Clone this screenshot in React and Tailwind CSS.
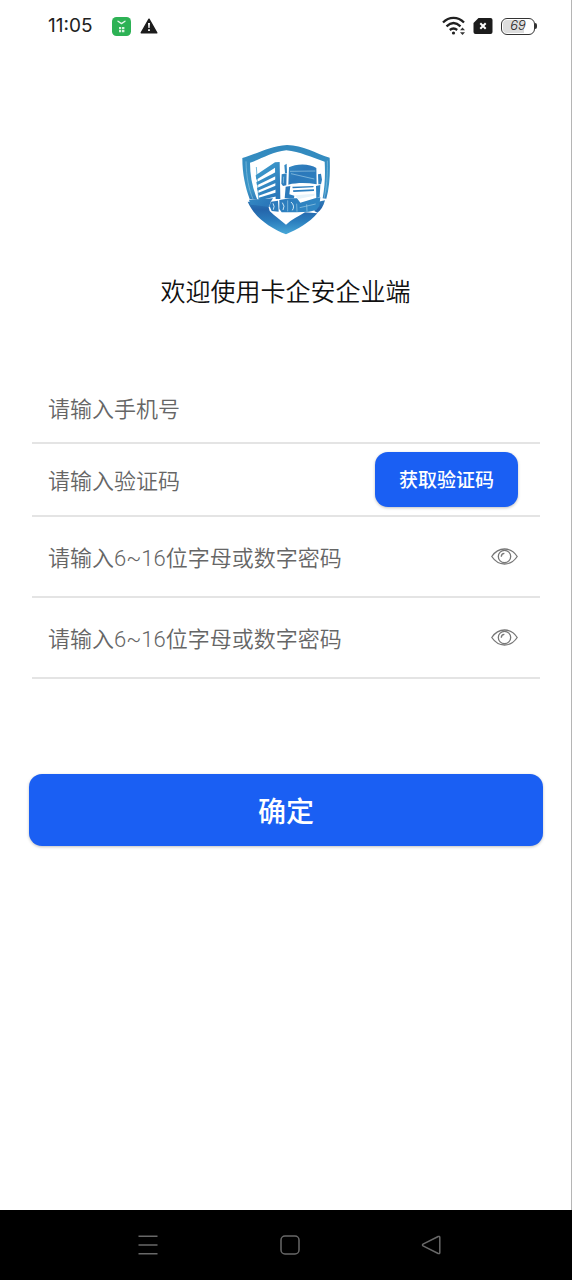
import React, {useState} from "react";

function ShieldLogo() {
    return (
        <svg viewBox="0 0 306 330" className="w-[102px] h-[110px]" role="img" aria-label="卡企安">
            <defs>
                <linearGradient id="shield" gradientUnits="userSpaceOnUse" x1="150" y1="30" x2="150" y2="298">
                    <stop offset="0" stopColor="#3188bd" />
                    <stop offset="0.5" stopColor="#3c96c8" />
                    <stop offset="0.72" stopColor="#2464aa" />
                    <stop offset="0.85" stopColor="#2b7dbd" />
                    <stop offset="1" stopColor="#48a8d8" />
                </linearGradient>
                <linearGradient id="truck" gradientUnits="userSpaceOnUse" x1="80" y1="90" x2="210" y2="235">
                    <stop offset="0" stopColor="#3d9acb" />
                    <stop offset="0.5" stopColor="#2b78ba" />
                    <stop offset="1" stopColor="#2f86c3" />
                </linearGradient>
            </defs>
            <g fill="url(#shield)">
                <path d="M22 69C61 59 101 34 156 30C205 31 241 55 284 68C286 112 284 155 274 191L263 190C270 151 271 117 269 80C231 68 194 50 154 46C111 51 79 72 45 83C45 121 52 158 67 194L44 192C31 157 22 117 22 69Z" />
                <path d="M38 200L98 206L104 228C118 242 136 255 153 269C170 254 190 244 210 232L247 235C222 264 188 283 153 298C104 278 59 248 38 200Z" />
                <path d="M250 200L270 196C265 215 257 227 247 233L238 228Z" />
            </g>
            <path d="M64 96L71 192" fill="none" stroke="#74b9dc" strokeWidth="3" />
            <path d="M33 79C34 127 42 165 54 192M277 77C278 124 275 158 267 190" fill="none" stroke="#89c2e0" strokeWidth="2" />
            <g fill="url(#truck)">
                <path d="M62 121L120 82L134 81L136 192L122 192L120 98L64 134Z" />
                <path d="M64 142L123 111L123 123L66 151Z" />
                <path d="M66 159L124 132L124 143L68 167Z" />
                <path d="M69 174L125 151L125 163L71 182Z" />
                <path d="M71 188L126 172L126 184L74 196Z" />
                <path d="M42 194L114 190L106 202L103 216L46 209Z" />
                <path d="M148 91L155 86L156 114L150 114Z" />
                <path d="M162 97C182 85 226 85 244 99L245 148C215 143 187 143 160 149Z" />
                <path d="M140 118L155 115L154 151L144 153L139 146ZM249 118L258 116L261 134L258 148L250 148Z" />
                <path d="M152 155L166 153L163 178L178 182L177 190L149 190Z" />
                <path d="M172 155L236 153L235 157L173 160ZM174 166L237 163L237 168L175 171Z" />
                <path d="M243 153L256 150L254 186L244 190Z" />
                <path d="M133 195L165 190L186 190L196 203L240 190L256 187L253 213L244 225L222 230L184 232L140 232L133 222Z" />
                <path d="M107 200L129 197L131 230L110 228L104 214Z" />
            </g>
            <g fill="none" stroke="#9dcbe6" strokeWidth="2">
                <path d="M165 109L241 108M168 116L238 132M146 125L145 145" />
                <path d="M194 218L242 207M215 208L216 229" />
                <path d="M158 196L158 229M185 206L186 230" />
            </g>
            <g fill="none" stroke="#cfe7f4" strokeWidth="3">
                <path d="M114 205Q120 214 115 224" />
                <path d="M142 203Q151 213 144 225" />
                <path d="M168 201Q181 213 172 226" />
            </g>
            <path d="M180 181L239 176L238 182L190 192Z" fill="#e6f3fa" />
        </svg>
    );
}

function StatusBar() {
    return (
        <header className="h-[52px] pl-12 pr-[34px] flex items-center justify-between">
            <div className="flex items-center">
                <span className="font-['Inter',sans-serif] text-[19px] leading-6 text-[#222]">11:05</span>
                <svg viewBox="0 0 19 19" className="w-[19px] h-[19px] ml-5">
                    <rect width="19" height="19" rx="4.5" fill="#2db255" />
                    <path d="M6 4.2L9.5 6.6L13 4.2" fill="none" stroke="#e5f7ea" strokeWidth="1.3" strokeLinecap="round" strokeLinejoin="round" />
                    <path d="M7 10h2.2v2H7zM10 10h2.4v2H10zM7 12.7h2.2v2.6H7zM10 12.7h2.4v2.6H10z" fill="#d8f3df" />
                </svg>
                <svg viewBox="0 0 18 16" className="w-[18px] h-4 ml-[9px]">
                    <path d="M9 1.2L16.8 14.8H1.2Z" fill="#1c1c1c" stroke="#1c1c1c" strokeWidth="1.4" strokeLinejoin="round" />
                    <path d="M8 5h2l-.4 5H8.4zM8.1 11.2h1.8v1.8H8.1z" fill="#fff" />
                </svg>
            </div>
            <div className="flex items-center gap-2">
                <svg viewBox="0 0 24 20" className="w-6 h-5">
                    <g fill="none" stroke="#202020" strokeWidth="2.3">
                        <path d="M2 6.5C8 .3 17 .3 23 6.5" />
                        <path d="M5.5 10.3C10 6 15 6 19.5 10.3" />
                        <path d="M8.8 14C11.3 11.900 13.7 11.900 16.2 14" />
                    </g>
                    <circle cx="12.5" cy="17" r="1.6" fill="#202020" />
                    <path d="M19 14.2L21.5 11.4L24 14.2ZM19 16.2L21.5 19L24 16.2Z" fill="#333" />
                </svg>
                <svg viewBox="0 0 20 16" className="w-5 h-4">
                    <path d="M5.5 0H17.5Q19.5 0 19.5 2V14Q19.5 16 17.5 16H2.5Q.5 16 .5 14V5Z" fill="#1c1c1c" />
                    <path d="M7.3 5.3L12.7 10.7M12.7 5.3L7.3 10.7" stroke="#fff" strokeWidth="2" />
                </svg>
                <div className="flex items-center">
                    <span className="w-[34px] h-[17px] rounded-[6px] border border-[#333] p-px">
                        <span className="flex h-full items-center justify-center rounded-[4px] bg-linear-to-r from-[#ddd] from-70% to-white to-70% font-['Inter',sans-serif] text-[13px] font-light italic text-[#222]">69</span>
                    </span>
                    <span className="w-[2px] h-[6px] rounded-r-sm bg-[#333]"></span>
                </div>
            </div>
        </header>
    );
}

function EyeIcon() {
    return (
        <svg viewBox="0 0 27 18" className="w-[27px] h-[18px]" fill="none" stroke="#777" strokeWidth="1.3">
            <path d="M.8 8.5C7.5-1.5 19.5-1.5 26.2 8.5C19.5 18.5 7.5 18.5 .8 8.5Z" />
            <circle cx="13.5" cy="8.5" r="6.2" />
            <path d="M10.3 8.7C10.3 6.7 11.5 5.4 13.4 5.3" />
        </svg>
    );
}

const inputStyle = "min-w-0 flex-1 h-9 pt-1 bg-transparent outline-none font-[Roboto,'Noto_Sans_CJK_SC',sans-serif] text-[22px] leading-8 font-[350] text-[#333] placeholder:text-[#666]";

function PasswordRow({label, value, onChange}) {
    const [visible, setVisible] = useState(false);

    return (
        <div className="h-[81px] pl-4 pr-[22px] flex items-center border-b-2 border-[#e4e4e4]">
            <input value={value}
                    onChange={ev => onChange(ev.target.value)}
                    type={visible ? "text" : "password"}
                    aria-label={label}
                    placeholder="请输入6~16位字母或数字密码"
                    className={inputStyle}/>
            <button type="button" aria-label="显示密码" onClick={() => setVisible(!visible)}>
                <EyeIcon />
            </button>
        </div>
    );
}

function NavBar() {
    return (
        <nav className="h-[70px] bg-black pl-[138px] pr-[131px] flex items-center justify-between">
            <button type="button" aria-label="菜单">
                <svg viewBox="0 0 20 20" className="w-5 h-5" stroke="#686868" strokeWidth="1.5">
                    <path d="M.5 1.2H19.5M.5 10H19.5M.5 18.8H19.5" />
                </svg>
            </button>
            <button type="button" aria-label="主页">
                <svg viewBox="0 0 20 20" className="w-5 h-5" fill="none" stroke="#686868" strokeWidth="1.5">
                    <rect x="1" y="1" width="18" height="18" rx="4" />
                </svg>
            </button>
            <button type="button" aria-label="返回">
                <svg viewBox="0 0 20 20" className="w-5 h-5" fill="none" stroke="#686868" strokeWidth="1.5" strokeLinejoin="round">
                    <path d="M17.2 1.5L2 9.2Q1 10 2 10.8L17.2 18.5Q18.8 19 18.8 17.5V2.5Q18.8 1 17.2 1.5Z" />
                </svg>
            </button>
        </nav>
    );
}

export default function App() {
    const [phone, setPhone] = useState("");
    const [code, setCode] = useState("");
    const [password, setPassword] = useState("");
    const [confirmPassword, setConfirmPassword] = useState("");

    return (
    <div className="min-h-screen flex flex-col bg-white font-['Noto_Sans_CJK_SC',sans-serif]">
        <div className="flex-1 flex flex-col border-r border-[#b5b5b5]">
            <StatusBar />
            <main className="pt-[83px]">
                <div className="flex justify-center">
                    <ShieldLogo />
                </div>
                <h1 className="mt-[27px] text-center text-[25px] leading-9 font-[350] text-[#111]">欢迎使用卡企安企业端</h1>
                <form onSubmit={ev => ev.preventDefault()}>
                    <div className="mt-[65px] ml-8 mr-[31px]">
                        <div className="h-[71px] pl-4 flex items-center border-b-2 border-[#e4e4e4]">
                            <input value={phone}
                                    onChange={ev => setPhone(ev.target.value)}
                                    type="tel"
                                    aria-label="手机号"
                                    placeholder="请输入手机号"
                                    className={inputStyle}/>
                        </div>
                        <div className="h-[73px] pl-4 pr-[22px] flex items-center border-b-2 border-[#e4e4e4]">
                            <input value={code}
                                    onChange={ev => setCode(ev.target.value)}
                                    type="text"
                                    aria-label="验证码"
                                    placeholder="请输入验证码"
                                    className={inputStyle}/>
                            <button type="button" className="w-[143px] h-[55px] rounded-[13px] bg-[#1a5ff3] text-white text-[19px] font-medium shadow-[0_1px_3px_rgba(0,0,0,0.25)]">
                                获取验证码
                            </button>
                        </div>
                        <PasswordRow label="密码" value={password} onChange={setPassword} />
                        <PasswordRow label="确认密码" value={confirmPassword} onChange={setConfirmPassword} />
                    </div>
                    <div className="mt-[95px] ml-[29px] mr-7">
                        <button className="w-full h-[72px] rounded-[13px] bg-[#1a5ff3] text-white text-[28px] font-medium shadow-[0_1px_3px_rgba(0,0,0,0.25)]">
                            确定
                        </button>
                    </div>
                </form>
            </main>
        </div>
        <NavBar />
    </div>
    );
}
